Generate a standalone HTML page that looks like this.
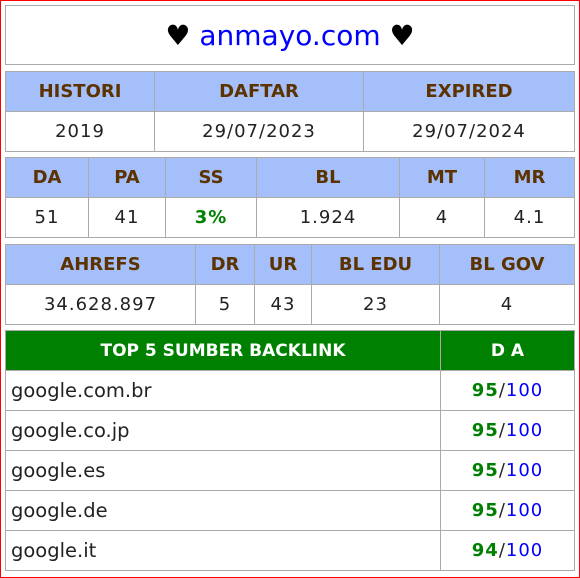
<!DOCTYPE html>
<html><head><meta charset="utf-8"><style>
body{margin:0;width:580px;height:578px;overflow:hidden;background:#fff;font-family:"DejaVu Sans","Liberation Sans",sans-serif}
.frame{position:absolute;left:0;top:0;width:578px;height:576px;border:1px solid #f00}
table{position:absolute;left:5px;width:570px;border-collapse:collapse;table-layout:fixed}
td{border:1px solid #aaa;text-align:center;padding:0;font-size:18px;color:#222;height:39px;letter-spacing:1px}
.h td{background:#a4bffa;color:#5c3300;font-weight:bold;letter-spacing:0}
.g td{background:#008000;color:#fff;font-weight:bold;font-size:17px;letter-spacing:0}
.l{text-align:left;padding-left:5px;font-size:19.5px;letter-spacing:0}
.gr{color:#008000;font-weight:bold}.bl{color:#00f}
</style></head><body><div class="frame"></div>
<table style="top:5px"><tr><td style="height:58px;font-size:28px;color:#000;letter-spacing:0">♥ <span class="bl">anmayo.com</span> ♥</td></tr></table>
<table style="top:71px"><col style="width:149px"><col style="width:209px"><col>
<tr class="h"><td>HISTORI</td><td>DAFTAR</td><td>EXPIRED</td></tr>
<tr><td>2019</td><td>29/07/2023</td><td>29/07/2024</td></tr></table>
<table style="top:157px"><col style="width:83px"><col style="width:77px"><col style="width:91px"><col style="width:143px"><col style="width:85px"><col>
<tr class="h"><td>DA</td><td>PA</td><td>SS</td><td>BL</td><td>MT</td><td>MR</td></tr>
<tr><td>51</td><td>41</td><td class="gr">3%</td><td>1.924</td><td>4</td><td>4.1</td></tr></table>
<table style="top:244px"><col style="width:190px"><col style="width:59px"><col style="width:57px"><col style="width:128px"><col>
<tr class="h"><td>AHREFS</td><td>DR</td><td>UR</td><td>BL EDU</td><td>BL GOV</td></tr>
<tr><td>34.628.897</td><td>5</td><td>43</td><td>23</td><td>4</td></tr></table>
<table style="top:330px"><col style="width:435px"><col>
<tr class="g"><td>TOP 5 SUMBER BACKLINK</td><td>D A</td></tr>
<tr><td class="l">google.com.br</td><td><span class="gr">95</span>/<span class="bl">100</span></td></tr>
<tr><td class="l">google.co.jp</td><td><span class="gr">95</span>/<span class="bl">100</span></td></tr>
<tr><td class="l">google.es</td><td><span class="gr">95</span>/<span class="bl">100</span></td></tr>
<tr><td class="l">google.de</td><td><span class="gr">95</span>/<span class="bl">100</span></td></tr>
<tr><td class="l">google.it</td><td><span class="gr">94</span>/<span class="bl">100</span></td></tr></table>
</body></html>
